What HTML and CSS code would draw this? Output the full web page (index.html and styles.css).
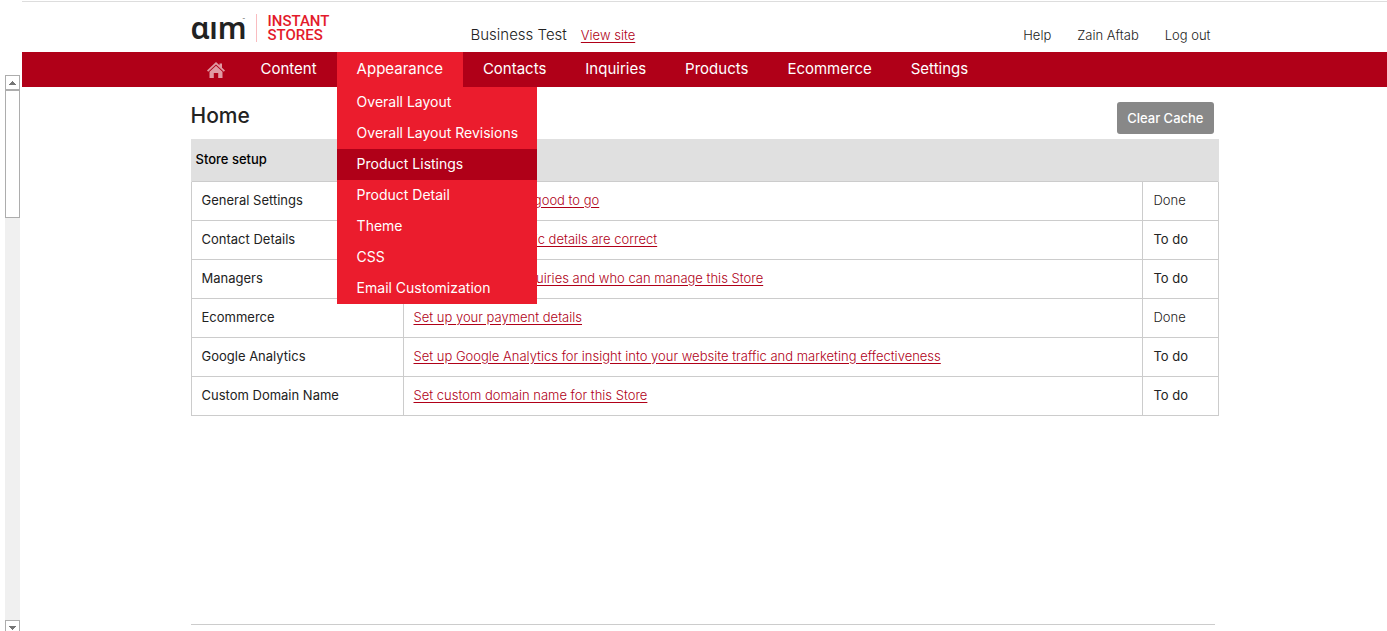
FILE: index.html
```html
<!DOCTYPE html>
<html lang="en">
<head>
<meta charset="utf-8">
<title>Home - Instant Stores</title>
<link rel="stylesheet" href="styles.css">
</head>
<body>
<div class="shell">
  <aside class="gutter" aria-hidden="true">
    <div class="scrollbar">
      <div class="scroll-button"><svg width="7" height="4" viewBox="0 0 7 4" shape-rendering="crispEdges"><path d="M3 0h1v1h1v1h1v1h1v1H0V3h1V2h1V1h1z"/></svg></div>
      <div class="scroll-thumb"></div>
      <div class="scroll-track"></div>
      <div class="scroll-button scroll-button-end"><svg width="7" height="4" viewBox="0 0 7 4" shape-rendering="crispEdges"><path d="M0 0h7v1H6v1H5v1H4v1H3V3H2V2H1V1H0z"/></svg></div>
    </div>
  </aside>
  <div class="page">
    <header class="container header">
      <div class="logo">
        <span class="logo-aim" aria-label="aim">ɑım</span><span class="logo-tm">™</span>
        <span class="logo-name"><span>INSTANT</span><span>STORES</span></span>
      </div>
      <span class="business">Business Test</span>
      <a class="view-site" href="#">View site</a>
      <div class="account">
        <a href="#">Help</a>
        <a href="#">Zain Aftab</a>
        <a href="#">Log out</a>
      </div>
    </header>
    <nav class="nav">
      <ul class="container menu">
        <li><a class="home" href="#" aria-label="Home"><svg width="18" height="16" viewBox="0 0 18 16"><path d="M9 0l3.500 3.300V1.500H15v4.200L18 8.500l-1.200 1.200L9 2.500 1.200 9.700 0 8.500z"/><path d="M9 3.800l6.500 6V16h-4.300v-5H6.800v5H2.500V9.800z"/></svg></a></li>
        <li><a href="#">Content</a></li>
        <li class="open"><a href="#">Appearance</a>
          <ul class="submenu">
            <li><a href="#">Overall Layout</a></li>
            <li><a href="#">Overall Layout Revisions</a></li>
            <li><a class="current" href="#">Product Listings</a></li>
            <li><a href="#">Product Detail</a></li>
            <li><a href="#">Theme</a></li>
            <li><a href="#">CSS</a></li>
            <li><a href="#">Email Customization</a></li>
          </ul>
        </li>
        <li><a href="#">Contacts</a></li>
        <li><a href="#">Inquiries</a></li>
        <li><a href="#">Products</a></li>
        <li><a href="#">Ecommerce</a></li>
        <li><a href="#">Settings</a></li>
      </ul>
    </nav>
    <main class="container main">
      <div class="heading">
        <h1>Home</h1>
        <button class="clear" type="button">Clear Cache</button>
      </div>
      <table class="setup">
        <colgroup><col class="col-name"><col><col class="col-status"></colgroup>
        <thead><tr><th colspan="3">Store setup</th></tr></thead>
        <tbody>
          <tr><td>General Settings</td><td><a href="#">Check your store is good to go</a></td><td class="done">Done</td></tr>
          <tr><td>Contact Details</td><td><a href="#">Check that your basic details are correct</a></td><td>To do</td></tr>
          <tr><td>Managers</td><td><a href="#">Set who handles inquiries and who can manage this Store</a></td><td>To do</td></tr>
          <tr><td>Ecommerce</td><td><a href="#">Set up your payment details</a></td><td class="done">Done</td></tr>
          <tr><td>Google Analytics</td><td><a href="#">Set up Google Analytics for insight into your website traffic and marketing effectiveness</a></td><td>To do</td></tr>
          <tr><td>Custom Domain Name</td><td><a href="#">Set custom domain name for this Store</a></td><td>To do</td></tr>
        </tbody>
      </table>
      <footer class="footer"></footer>
    </main>
  </div>
</div>
</body>
</html>
```
FILE: styles.css
```css
* { box-sizing: border-box; }
body { margin: 0; background: #fff; color: #222; font-family: Inter, "Liberation Sans", sans-serif; font-size: 13px; line-height: 18px; }
a { color: inherit; text-decoration: none; }
ul { list-style: none; margin: 0; padding: 0; }

.shell { display: grid; grid-template-columns: 22px 1fr; min-height: 100vh; }
.gutter { display: flex; padding: 75px 2px 0 5px; }
.scrollbar { flex: 1; display: flex; flex-direction: column; background: #f0f0f0; }
.scroll-button { height: 15px; display: flex; align-items: center; justify-content: center; border: 1px solid #adadad; background: #fff; fill: #757575; }
.scroll-button-end { height: 11px; border-bottom: 0; align-items: flex-end; padding-bottom: 1px; }
.scroll-thumb { height: 128px; border: 1px solid #adadad; background: #fff; }
.scroll-track { flex: 1; }

.page { display: flex; flex-direction: column; padding-top: 1px; }
.page::before { content: ""; height: 1px; background: #ddd; }
.container { width: 100%; max-width: 1028px; margin: 0 auto; }
.header { height: 50px; display: flex; align-items: flex-end; padding: 0 8px 8px 0; }
.logo { width: 280px; height: 30px; display: flex; align-items: flex-start; }
.logo-aim { font-family: "Noto Sans", sans-serif; font-weight: 600; font-size: 30px; line-height: 28px; width: 52px; }
.logo-tm { width: 4px; font-size: 4px; line-height: 12px; }
.logo-name { margin-left: 9px; padding-left: 11px; border-left: 1px solid #f9bcc0; font: 500 15px/14px Roboto, sans-serif; color: #e31b2b; display: grid; }
.business { font-size: 15px; font-weight: 300; margin-right: 14px; }
.view-site { font-weight: 300; color: #b00018; text-decoration: underline; text-underline-offset: 2px; }
.account { margin-left: auto; display: flex; gap: 26px; font-weight: 300; }

.nav { background: #b00018; color: #fff; }
.menu { display: flex; font-size: 15px; }
.menu > li > a { display: flex; align-items: center; height: 35px; padding: 0 20px 1px; }
.menu > .open ~ li > a { padding-right: 19px; }
.menu > li > .home { padding: 1px 16px 0; fill: #e09aa3; }
.open { position: relative; background: #eb1c2d; }
.submenu { position: absolute; left: 0; top: 100%; width: 200px; z-index: 2; background: #eb1c2d; font-size: 14px; }
.submenu a { display: block; padding: 0 20px 1px; line-height: 30px; white-space: nowrap; }
.submenu .current { background: #b00018; }

.main { flex: 1; display: flex; flex-direction: column; }
.heading { display: flex; align-items: center; justify-content: space-between; padding: 15px 5px 5px 0; }
h1 { margin: 0; font-size: 21px; line-height: 28px; padding-bottom: 4px; font-weight: 500; }
.clear { height: 32px; padding: 0 10px; border: 0; border-radius: 3px; background: #888; color: #fff; font: 500 13px/18px Inter, sans-serif; }
.setup { width: 100%; table-layout: fixed; border-collapse: collapse; }
.col-name { width: 212px; }
.col-status { width: 75px; }
th { height: 42px; padding: 0 4px 2px; border: 1px solid #e0e0e0; border-width: 0 1px; background: #e0e0e0; color: #000; text-align: left; font-weight: 500; }
td { height: 39px; padding: 0 10px 2px; border: 1px solid #ccc; }
td a { font-weight: 300; color: #b00018; text-decoration: underline; text-underline-offset: 2px; }
.done { font-weight: 300; }
.footer { margin: auto 4px 6px 0; border-top: 1px solid #ccc; }
```
